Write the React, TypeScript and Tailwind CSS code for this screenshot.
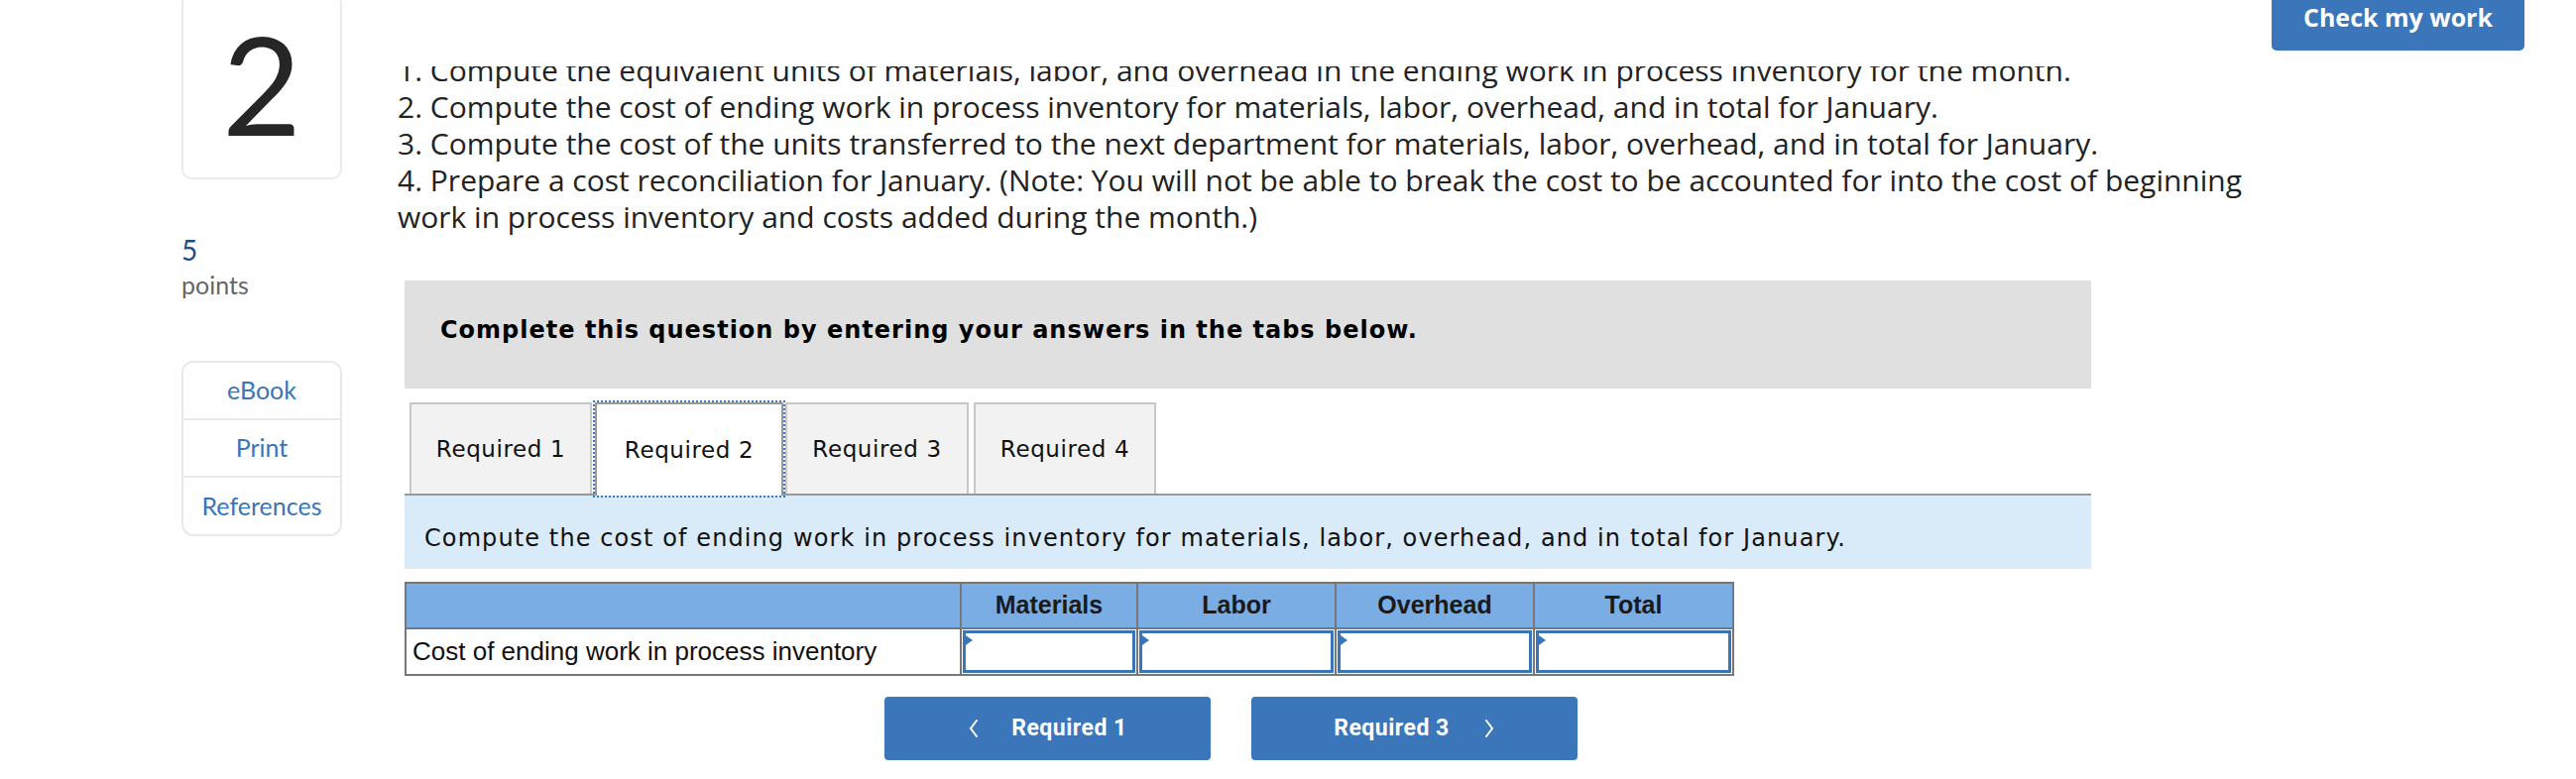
import React from 'react';

const lato = "font-['Lato','Noto_Sans',sans-serif]";
const verdana = "font-['DejaVu_Sans','Verdana',sans-serif]";
const arial = "font-['Liberation_Sans','Arial',sans-serif]";

const tabs = [
  { label: 'Required 1', w: 'w-[184px]', ml: 'ml-[5px]', active: false },
  { label: 'Required 2', w: 'w-[190px]', ml: 'ml-[3px]', active: true },
  { label: 'Required 3', w: 'w-[185px]', ml: 'ml-[2px]', active: false },
  { label: 'Required 4', w: 'w-[184px]', ml: 'ml-[5px]', active: false },
];

const columns = ['Materials', 'Labor', 'Overhead', 'Total'];

const Chevron = ({ dir }: { dir: 'left' | 'right' }) => (
  <svg width="12" height="20" viewBox="0 0 12 20" fill="none" stroke="white" strokeWidth="2" strokeLinecap="round">
    {dir === 'left' ? <polyline points="9,2 3,10 9,18" /> : <polyline points="3,2 9,10 3,18" />}
  </svg>
);

const AnswerCell = () => (
  <td className="border-2 border-[#777] p-[1px] h-[47px]">
    <div className="relative h-full border-[3px] border-[#3a75b8] bg-white">
      <span className="absolute -left-[3px] top-0 w-0 h-0 border-y-[7px] border-y-transparent border-l-[10px] border-l-[#3a75b8]" />
    </div>
  </td>
);

export default function App() {
  return (
    <div className="w-[2598px] h-[786px] overflow-hidden bg-white">
      <div className="flex pl-[183px]">
        {/* left rail */}
        <aside className={`w-[162px] shrink-0 flex flex-col ${lato}`}>
          <div className="-mt-[6px] h-[187px] border-2 border-[#ebebeb] rounded-[10px] flex items-center justify-center pb-[8px] text-[138px] leading-none text-[#262626]">
            2
          </div>
          <div className="mt-[57px] text-[28px] leading-none text-[#1b4f8f]">5</div>
          <div className="mt-[9px] text-[25px] leading-none text-[#666]">points</div>
          <div className="mt-[64px] h-[177px] border-2 border-[#e9e9e9] rounded-[12px] flex flex-col text-[25px] text-[#3a75b8]">
            <div className="h-[58px] flex items-center justify-center border-b-2 border-[#e9e9e9]">eBook</div>
            <div className="h-[58px] flex items-center justify-center border-b-2 border-[#e9e9e9]">Print</div>
            <div className="flex-1 flex items-center justify-center">References</div>
          </div>
        </aside>

        {/* question */}
        <main className="ml-[56px] w-[1885px] shrink-0">
          <div className="mt-[67px] h-[170px] overflow-hidden font-['Open_Sans','Lato',sans-serif] text-[30px] leading-[37px] text-[#222]">
            <div className="-mt-[15px]">
              <p>1. Compute the equivalent units of materials, labor, and overhead in the ending work in process inventory for the month.</p>
              <p>2. Compute the cost of ending work in process inventory for materials, labor, overhead, and in total for January.</p>
              <p>3. Compute the cost of the units transferred to the next department for materials, labor, overhead, and in total for January.</p>
              <p>4. Prepare a cost reconciliation for January. (Note: You will not be able to break the cost to be accounted for into the cost of beginning work in process inventory and costs added during the month.)</p>
            </div>
          </div>

          <div className="ml-[7px] w-[1701px]">
            <div className={`mt-[46px] h-[109px] bg-[#e0e0e0] pl-[36px] pt-[32px] ${verdana} text-[24px] tracking-[1px] font-bold text-black`}>
              Complete this question by entering your answers in the tabs below.
            </div>

            <div className={`mt-[14px] flex items-end border-b-2 border-[#999] ${verdana} text-[23px] tracking-[0.6px] text-[#111]`}>
              {tabs.map((t) =>
                t.active ? (
                  <div
                    key={t.label}
                    className={`${t.w} ${t.ml} h-[94px] -mb-[2px] relative flex items-center justify-center bg-white border-2 border-b-0 border-[#999] outline-2 outline-dotted outline-[#3a7bc8]`}
                  >
                    {t.label}
                  </div>
                ) : (
                  <div
                    key={t.label}
                    className={`${t.w} ${t.ml} h-[92px] flex items-center justify-center bg-[#f2f2f2] border-2 border-b-0 border-[#c8c8c8]`}
                  >
                    {t.label}
                  </div>
                )
              )}
            </div>

            <div className={`h-[74px] bg-[#d9eaf8] pl-[20px] pt-[25px] ${verdana} text-[24px] tracking-[1.1px] text-[#111]`}>
              Compute the cost of ending work in process inventory for materials, labor, overhead, and in total for January.
            </div>

            <table className={`mt-[13px] w-[1339px] table-fixed border-collapse border-2 border-[#777] ${arial}`}>
              <colgroup>
                <col className="w-[560px]" />
                <col className="w-[178px]" />
                <col className="w-[200px]" />
                <col className="w-[200px]" />
                <col className="w-[201px]" />
              </colgroup>
              <thead>
                <tr className="h-[46px] bg-[#79ade4]">
                  <th className="border-2 border-[#777]" />
                  {columns.map((c) => (
                    <th key={c} className="border-2 border-[#777] text-[25px] font-bold text-[#1a1a1a] text-center">
                      {c}
                    </th>
                  ))}
                </tr>
              </thead>
              <tbody>
                <tr>
                  <td className="border-2 border-[#777] pl-[6px] text-[26px] text-[#111] text-left">
                    Cost of ending work in process inventory
                  </td>
                  {columns.map((c) => (
                    <AnswerCell key={c} />
                  ))}
                </tr>
              </tbody>
            </table>

            <div className="mt-[21px] ml-[484px] flex gap-[41px] font-['Roboto',sans-serif] text-[23px] font-bold text-white tracking-[0.5px]">
              <button className="w-[329px] h-[64px] rounded-[4px] bg-[#3a76b9] flex items-center justify-center gap-[32px]">
                <Chevron dir="left" />
                <span>Required 1</span>
              </button>
              <button className="w-[329px] h-[64px] rounded-[4px] bg-[#3a76b9] flex items-center justify-center gap-[34px]">
                <span>Required 3</span>
                <Chevron dir="right" />
              </button>
            </div>
          </div>
        </main>

        <div className="ml-[5px]">
          <button className="w-[255px] h-[51px] rounded-b-[5px] bg-[#3a76b9] text-white font-['Open_Sans',sans-serif] font-bold text-[25px] leading-[34px] pt-0 flex justify-center">
            Check my work
          </button>
        </div>
      </div>
    </div>
  );
}
